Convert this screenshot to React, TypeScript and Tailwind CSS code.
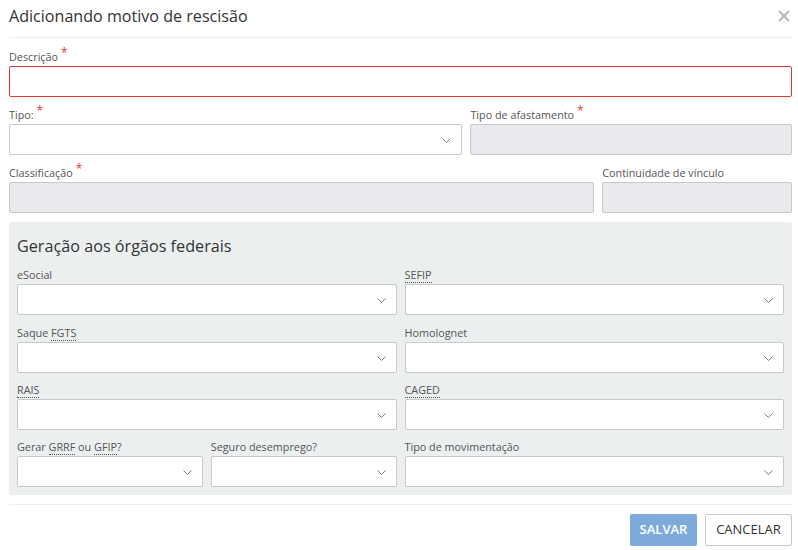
import React from "react";

const font = { fontFamily: '"Open Sans", "Liberation Sans", sans-serif' };

function Star() {
  return <span className="relative -top-[4px] ml-[3px] text-[12px] leading-none text-[#e53935]">*</span>;
}

function Abbr({ children }: { children: React.ReactNode }) {
  return <span className="border-b border-dotted border-[#555]">{children}</span>;
}

function Chevron() {
  return (
    <svg width="9" height="5" viewBox="0 0 9 5" className="absolute right-[10px] top-[13px]">
      <path d="M0.5 0.5 L4.5 4.5 L8.5 0.5" fill="none" stroke="#7a7a7a" strokeWidth="1" />
    </svg>
  );
}

function Label({ children }: { children: React.ReactNode }) {
  return <div className="h-[18px] text-[10.8px] leading-[18px] text-[#555] whitespace-nowrap">{children}</div>;
}

function Select() {
  return (
    <div className="relative h-[31px] rounded-[2px] border border-[#c8c8c8] bg-white">
      <Chevron />
    </div>
  );
}

function Field({
  label,
  kind = "select",
  className = "",
}: {
  label: React.ReactNode;
  kind?: "select" | "disabled" | "error";
  className?: string;
}) {
  return (
    <div className={className}>
      <Label>{label}</Label>
      {kind === "select" && <Select />}
      {kind === "disabled" && <div className="h-[31px] rounded-[2px] border border-[#c8c8c8] bg-[#e9eaee]" />}
      {kind === "error" && <div className="h-[31px] rounded-[2px] border border-[#e53935] bg-white" />}
    </div>
  );
}

export default function App() {
  return (
    <div className="w-[798px] h-[550px] bg-white text-[#333]" style={font}>
      <div className="pl-[9px] pr-[6px]">
        {/* header */}
        <div className="flex h-[38px] items-center justify-between border-b border-[#eeeeee]">
          <div className="text-[16.1px] leading-[24px] text-[#333] -mt-[5px]">Adicionando motivo de rescisão</div>
          <svg width="12" height="12" viewBox="0 0 12 12" className="-mt-[5px] mr-[2px]">
            <path d="M1 1 L11 11 M11 1 L1 11" stroke="#b5b5b5" strokeWidth="1.8" />
          </svg>
        </div>

        {/* top fields */}
        <div className="pt-[10px]">
          <Field label={<>Descrição<Star /></>} kind="error" className="mb-[9px]" />
          <div className="grid grid-cols-12 gap-x-2 gap-y-[9px]">
            <Field label={<>Tipo:<Star /></>} className="col-span-7" />
            <Field label={<>Tipo de afastamento<Star /></>} kind="disabled" className="col-span-5" />
            <Field label={<>Classificação<Star /></>} kind="disabled" className="col-span-9" />
            <Field label="Continuidade de vínculo" kind="disabled" className="col-span-3" />
          </div>

          {/* federal panel */}
          <div className="mt-[9px] rounded-[3px] bg-[#eceff0] px-2 pt-[12px] pb-[8px]">
            <div className="mb-[8px] h-6 text-[16.2px] leading-6 text-[#333]">Geração aos órgãos federais</div>
            <div className="grid grid-cols-4 gap-x-2 gap-y-[9px]">
              <Field label="eSocial" className="col-span-2" />
              <Field label={<Abbr>SEFIP</Abbr>} className="col-span-2" />
              <Field label={<>Saque <Abbr>FGTS</Abbr></>} className="col-span-2" />
              <Field label="Homolognet" className="col-span-2" />
              <Field label={<Abbr>RAIS</Abbr>} className="col-span-2 -mt-px" />
              <Field label={<Abbr>CAGED</Abbr>} className="col-span-2 -mt-px" />
              <Field label={<>Gerar <Abbr>GRRF</Abbr> ou <Abbr>GFIP</Abbr>?</>} className="-mt-px" />
              <Field label="Seguro desemprego?" className="-mt-px" />
              <Field label="Tipo de movimentação" className="col-span-2 -mt-px" />
            </div>
          </div>

          {/* footer */}
          <div className="mt-[9px] flex justify-end gap-[8px] border-t border-[#eeeeee] pt-[9px]">
            <button className="h-[32px] w-[67px] rounded-[2px] bg-[#7eaadb] text-[13px] font-semibold text-white">
              SALVAR
            </button>
            <button className="h-[32px] w-[87px] rounded-[2px] border border-[#c8c8c8] bg-white text-[13px] text-[#333]">
              CANCELAR
            </button>
          </div>
        </div>
      </div>
    </div>
  );
}
